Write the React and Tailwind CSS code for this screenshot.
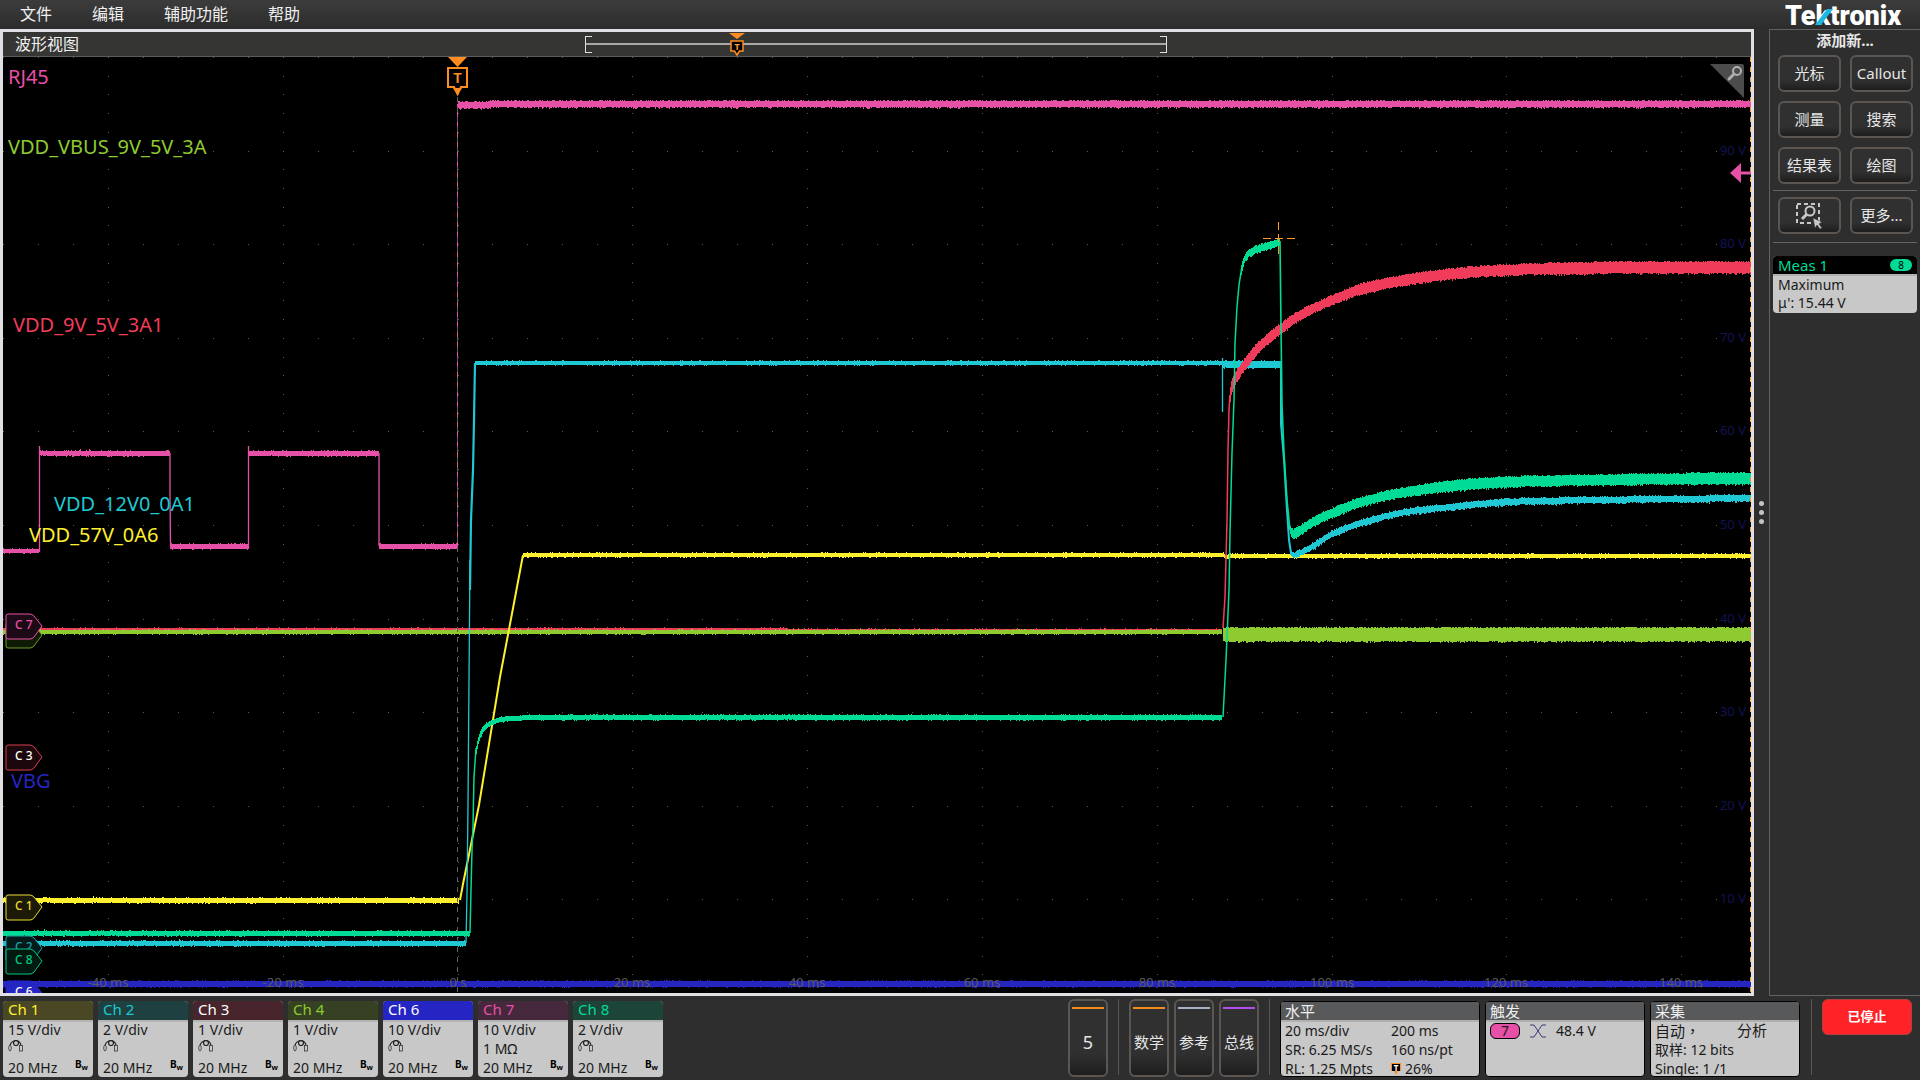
import React from "react";

const menus = ["文件", "编辑", "辅助功能", "帮助"];

const channels = [
    { name: "Ch 1", scale: "15 V/div", head: "bg-[#4a4824] text-[#fff02e]" },
    { name: "Ch 2", scale: "2 V/div", head: "bg-[#1e4040] text-[#1fc8d2]" },
    { name: "Ch 3", scale: "1 V/div", head: "bg-[#48252c] text-white" },
    { name: "Ch 4", scale: "1 V/div", head: "bg-[#364022] text-[#8ccb30]" },
    { name: "Ch 6", scale: "10 V/div", head: "bg-[#2525c4] text-white" },
    { name: "Ch 7", scale: "10 V/div", impedance: "1 MΩ", head: "bg-[#45283c] text-[#e650a6]" },
    { name: "Ch 8", scale: "2 V/div", head: "bg-[#1c4438] text-[#00dc96]" },
];

const addButtons = ["光标", "Callout", "测量", "搜索", "结果表", "绘图"];

const sourceButtons = [
    { name: "数学", bar: "bg-[#f28a1e]" },
    { name: "参考", bar: "bg-[#a8b0c4]" },
    { name: "总线", bar: "bg-[#b04ef0]" },
];

// plot area, in svg units
const LEFT = 3;
const TOP = 57;
const WIDTH = 1748;
const HEIGHT = 936;
const BOTTOM = TOP + HEIGHT;
const DIV_X = WIDTH / 10;
const DIV_Y = HEIGHT / 10;
const ZERO_X = 457.5;

// each point is [x, y, thickness]; these get a noisy edge
const bands = [
    { color: "#2525c0", points: [[3, 984, 6], [1751, 984, 6]] },
    { color: "#f03c5a", noise: 0.08, points: [[3, 630, 4], [300, 630, 4], [1222, 631, 4]] },
    { color: "#8ecb30", points: [[3, 632, 4], [1222, 632, 4]] },
    { color: "#8ecb30", noise: 0.6, points: [[1223, 634, 13], [1751, 634, 13]] },
    { color: "#fff02e", points: [[3, 900, 5], [459, 900, 5]] },
    { color: "#fff02e", points: [[523, 555, 4], [1222, 555, 4], [1226, 557, 4], [1230, 556, 4], [1751, 556, 4]] },
    { color: "#1fc8d2", points: [[3, 943, 5], [466, 943, 5]] },
    { color: "#1fc8d2", points: [[475, 363, 4], [1222, 363, 4]] },
    { color: "#1fc8d2", points: [[1223, 364, 7], [1281, 364, 7]] },
    {
        color: "#1fc8d2", noise: 0.3,
        points: [[1290, 553, 4], [1294, 555, 5], [1311, 547, 6], [1332, 534, 6], [1361, 523, 6], [1400, 513, 6],
            [1450, 507, 6], [1507, 502, 6], [1593, 500, 6], [1751, 498, 6]],
    },
    {
        color: "#f03c5a", noise: 0.5,
        points: [[1229, 402, 14], [1231, 388, 14], [1234, 380, 12], [1239, 372, 11], [1246, 362, 11], [1254, 352, 11],
            [1264, 342, 10], [1280, 329, 10], [1300, 315, 9], [1332, 300, 9], [1361, 289, 10], [1400, 281, 10],
            [1450, 274, 10], [1507, 270, 10], [1593, 268, 11], [1751, 267, 11]],
    },
    { color: "#00dc96", points: [[3, 933, 5], [470, 933, 5]] },
    { color: "#00dc96", noise: 0.1, points: [[476, 750, 8], [479, 737, 7], [484, 728, 6], [493, 722, 5], [504, 719, 5], [521, 718, 5], [560, 717, 5]] },
    { color: "#00dc96", points: [[560, 717, 5], [1222, 717, 5]] },
    { color: "#00dc96", noise: 0.3, points: [[1241, 270, 9], [1243, 262, 8], [1246, 256, 7], [1252, 251, 7], [1264, 247, 7], [1280, 242, 7]] },
    {
        color: "#00dc96", noise: 0.4,
        points: [[1290, 530, 8], [1293, 534, 9], [1311, 523, 9], [1332, 513, 9], [1361, 502, 9], [1400, 493, 9],
            [1450, 486, 10], [1507, 482, 10], [1593, 480, 10], [1751, 478, 11]],
    },
    { color: "#e650a6", points: [[3, 551, 4], [39, 551, 4]] },
    { color: "#e650a6", points: [[39, 453, 5], [170, 453, 5]] },
    { color: "#e650a6", points: [[170, 546, 5], [249, 546, 5]] },
    { color: "#e650a6", points: [[249, 453, 5], [379, 453, 5]] },
    { color: "#e650a6", points: [[379, 546, 5], [458, 546, 5]] },
    { color: "#e650a6", noise: 0.35, points: [[458, 105, 6], [530, 104, 6], [1751, 104, 6]] },
];

// the fast edges
const edges = [
    { color: "#fff02e", width: 2, d: "M460 900L463 884L479 805L500 677L514 603L523 555" },
    { color: "#1fc8d2", width: 1.3, d: "M466 943L467 893L468 805L469 680L470 560" },
    { color: "#1fc8d2", width: 2.2, d: "M470 590L471 520L473 470L474 420L475 363" },
    { color: "#1fc8d2", width: 1.3, d: "M1222.5 358V412" },
    { color: "#1fc8d2", width: 2, d: "M1281 364L1281 424L1284 460L1287 510L1289 540L1291 553" },
    { color: "#f03c5a", width: 1.5, d: "M1223 628L1225 597L1227 520L1228 450L1229 410L1230 395" },
    { color: "#00dc96", width: 1.5, d: "M470 933L471 890L472 850L473 827L474 777L476 748" },
    { color: "#00dc96", width: 1.5, d: "M1223 717L1226 660L1229 590L1230 533L1232 453L1234 400L1235 343L1237 307L1239 285L1242 266" },
    { color: "#00dc96", width: 1.6, d: "M1280 241L1281 327L1282 404L1284 453L1287 500L1290 530" },
    { color: "#e650a6", width: 1.3, d: "M39.5 552V446M170 453L170 493L170.5 546M248.5 548V446M379 453L379 546" },
    { color: "#e650a6", width: 1, d: "M457.5 546V104" },
];

const labels = [
    { text: "RJ45", x: 8, y: 84, color: "#e650a6" },
    { text: "VDD_VBUS_9V_5V_3A", x: 8, y: 154, color: "#8ecb30" },
    { text: "VDD_9V_5V_3A1", x: 13, y: 332, color: "#f03c5a" },
    { text: "VDD_12V0_0A1", x: 54, y: 511, color: "#1fc8d2" },
    { text: "VDD_57V_0A6", x: 29, y: 542, color: "#fff02e" },
    { text: "VBG", x: 11, y: 788, color: "#2525c4" },
];

const badges = [
    { text: "C 4", y: 623, color: "#6d9a28", fill: "#0f1a05" },
    { text: "C 7", y: 614, color: "#e650a6", fill: "#1c0a16" },
    { text: "C 3", y: 745, color: "#d83c54", fill: "#1c080c", ink: "#ffffff" },
    { text: "C 1", y: 895, color: "#e8dc30", fill: "#1c1a06" },
    { text: "C 2", y: 936, color: "#1aa0a8", fill: "#04191a" },
    { text: "C 8", y: 949, color: "#00c888", fill: "#03180f" },
    { text: "C 6", y: 981, color: "#2525c4", fill: "#2525c4", ink: "#ffffff" },
];

const random = (n) => {
    const s = Math.sin(n * 12.9898) * 43758.5453;
    return s - Math.floor(s);
};

const range = (n) => Array.from({ length: n }, (_, i) => i);

const bandPath = (points, noise = 0.15) => {
    const slope = (i, k) => {
        const a = points[Math.max(0, i - 1)];
        const b = points[Math.min(points.length - 1, i + 1)];
        return (b[k] - a[k]) / (b[0] - a[0]);
    };
    const value = (i, x, k) => {
        const a = points[i];
        const b = points[i + 1];
        const h = b[0] - a[0];
        const t = (x - a[0]) / h;
        return (2 * t ** 3 - 3 * t ** 2 + 1) * a[k] + (t ** 3 - 2 * t ** 2 + t) * h * slope(i, k)
            + (-2 * t ** 3 + 3 * t ** 2) * b[k] + (t ** 3 - t ** 2) * h * slope(i + 1, k);
    };

    let d = "";
    let i = 0;
    for (let x = points[0][0]; x < points[points.length - 1][0]; x++) {
        while (x >= points[i + 1][0]) i++;
        const y = value(i, x, 1);
        const half = value(i, x, 2) / 2;
        const up = Math.round(y - half) - (random(x + y) < noise ? 1 : 0);
        const down = Math.round(y + half) + (random(x * 3 + y) < noise ? 1 : 0) + (noise > 0.25 && random(x * 7) < 0.15 ? 1 : 0);
        d += `M${x} ${up}h1V${down}h-1z`;
    }
    return d;
};

const TriggerMark = () => (
    <g>
        <path d="M448 57H467L457.5 67z" fill="#ff8c1e" />
        <path d="M448 68H467V87H461L457.5 94L454 87H448z" fill="#000" stroke="#ff8c1e" strokeWidth="2" />
        <path d="M453 88H462L457.5 95z" fill="#ff8c1e" />
        <text x="457.5" y="83" textAnchor="middle" fontSize="15" fontWeight="600" fill="#ff8c1e">T</text>
    </g>
);

const Waveforms = () => (
    <svg viewBox={`${LEFT} ${TOP} ${WIDTH} ${HEIGHT}`} className="block h-auto w-full bg-black" role="img" aria-label="波形视图">
        <g fill="#5a5a5a" shapeRendering="crispEdges">
            {range(11).map((j) => range(51).map((i) => (
                <rect key={`h${j}-${i}`} x={Math.round(LEFT + (i * DIV_X) / 5)} y={Math.round(TOP + j * DIV_Y)} width="1" height="1" />
            )))}
            {range(10).map((j) => range(51).map((i) => (
                <rect key={`v${j}-${i}`} x={Math.round(ZERO_X + (j - 2) * DIV_X)} y={Math.round(TOP + (i * DIV_Y) / 5)} width="1" height="1" />
            )))}
        </g>
        <g fontSize="13" fill="#121254" textAnchor="end">
            {range(9).map((i) => (
                <text key={i} x="1746" y={Math.round(TOP + (i + 1) * DIV_Y) + 4}>{90 - i * 10} V</text>
            ))}
        </g>

        <g shapeRendering="crispEdges">
            {bands.slice(0, 11).map((b, i) => <path key={i} d={bandPath(b.points, b.noise)} fill={b.color} />)}
        </g>
        {edges.map((e, i) => <path key={i} d={e.d} fill="none" stroke={e.color} strokeWidth={e.width} />)}
        <g shapeRendering="crispEdges">
            {bands.slice(11).map((b, i) => <path key={i} d={bandPath(b.points, b.noise)} fill={b.color} />)}
        </g>

        <path d={`M457.5 ${TOP}V${BOTTOM}`} stroke="#606060" strokeDasharray="5 5" />
        <path d={`M1750.5 ${TOP}V${BOTTOM}`} stroke="#ff9a24" strokeDasharray="5 5" />
        <path d="M1263 238.5h8m4 0h8m4 0h8M1278.5 222v8m0 4v8m0 4v8" stroke="#ff9a24" fill="none" />

        <g fontSize="13" fill="#5a5a5a" textAnchor="middle">
            {range(10).map((i) => {
                const t = i * 20 - 40;
                return <text key={i} x={Math.round(ZERO_X + (i - 2) * DIV_X)} y="987">{t === 0 ? "0 s" : `${t} ms`}</text>;
            })}
        </g>
        <g fontSize="20">
            {labels.map((l) => <text key={l.text} x={l.x} y={l.y} fill={l.color}>{l.text}</text>)}
        </g>
        {badges.map((b) => (
            <g key={b.text}>
                <path
                    d={`M8 ${b.y}H30Q32 ${b.y} 34 ${b.y + 2}L42 ${b.y + 12}L34 ${b.y + 23}Q32 ${b.y + 25} 30 ${b.y + 25}H8Q6 ${b.y + 25} 6 ${b.y + 23}V${b.y + 2}Q6 ${b.y} 8 ${b.y}z`}
                    fill={b.fill}
                    stroke={b.color}
                />
                <text x="15" y={b.y + 15} fontSize="12" fontWeight="500" fill={b.ink ?? b.color}>{b.text}</text>
            </g>
        ))}

        <TriggerMark />
        <path d="M1710 64H1742Q1744 64 1744 66V98z" fill="#4c4c4c" />
        <g fill="none" stroke="#b0b0b0">
            <circle cx="1737" cy="71" r="4" strokeWidth="2" />
            <path d="M1734 74L1729 79" strokeWidth="3" strokeLinecap="round" />
        </g>
        <path d="M1730 173L1741 163V171.5H1751V174.5H1741V183z" fill="#e650a6" />
    </svg>
);

const Overview = () => (
    <div className="relative ml-[33.3%] h-[17px] w-[33.3%] border-x border-[#e0e0e0]">
        <span className="absolute left-0 top-0 h-full w-1.5 border-y border-[#e0e0e0]" />
        <span className="absolute right-0 top-0 h-full w-1.5 border-y border-[#e0e0e0]" />
        <span className="absolute inset-x-0 top-[7px] h-0.5 bg-[#a8a8a8]" />
        <svg viewBox="0 0 16 24" className="absolute -top-1 left-[26%] h-6 w-4 -translate-x-1/2">
            <path d="M0 1H16L8 7z" fill="#ff8c1e" />
            <path d="M2 9H14V19H10.500L8 23L5.500 19H2z" fill="#000" stroke="#ff8c1e" strokeWidth="1.500" />
            <text x="8" y="18" textAnchor="middle" fontSize="9" fontWeight="700" fill="#ff9a3c">T</text>
        </svg>
    </div>
);

const Logo = () => (
    <svg viewBox="0 0 122 29" className="h-[29px] w-[122px] overflow-visible" role="img" aria-label="Tektronix">
        <text x="1" y="25" fontFamily="Roboto" fontSize="27" fontWeight="900" fill="#fff">Tektronix</text>
        <path d="M31 25L43 9H49L37 25z" fill="#1cb8e4" />
    </svg>
);

const ProbeIcon = () => (
    <svg viewBox="0 0 16 13" className="h-[13px] w-4" fill="none" stroke="#222">
        <ellipse cx="2" cy="9" rx="1.300" ry="3" strokeWidth=".7" />
        <path d="M2 6Q3.500 2 8 1.500Q12 2 13 6" strokeWidth="1.200" />
        <circle cx="8" cy="4" r="2.500" strokeWidth="1.200" />
        <rect x="11.500" y="6.500" width="3" height="5.500" strokeWidth=".7" />
    </svg>
);

const AreaZoomIcon = () => (
    <svg viewBox="0 0 27 26" className="h-[26px] w-[27px]" fill="none" stroke="#c8c8c8">
        <path d="M1 1H23V20H1z" strokeWidth="2" strokeDasharray="4 3" />
        <circle cx="14" cy="8" r="4.500" strokeWidth="2" />
        <path d="M11 11L6 16" strokeWidth="3" />
        <path d="M17 15L26 19L23 21L26 25L24 26L21 22L19 25z" fill="#c8c8c8" stroke="#2e2e2e" strokeWidth=".5" />
    </svg>
);

const PanelButton = ({ children, label }) => (
    <button
        aria-label={label}
        className="flex h-[37px] items-center justify-center rounded-md border-2 border-[#5c5652] bg-linear-to-b from-[#303030] from-70% to-[#1e1e1e] text-[15px] text-[#e6e6e6]"
    >
        {children}
    </button>
);

const TallButton = ({ name, bar, big }) => (
    <button className="flex h-[78px] w-10 flex-col items-center rounded-md border-2 border-[#5c5652] bg-linear-to-b from-[#303030] from-70% to-[#1e1e1e] pt-1.5 text-[#e6e6e6]">
        <span className={`h-0.5 w-8 ${bar}`} />
        <span className={`flex flex-1 items-center pb-1 pt-1 ${big ? "text-lg" : "text-[15px]"}`}>{name}</span>
    </button>
);

const Divider = () => <span className="h-[76px] w-px bg-[#5a5652]" />;

const Settings = ({ title, width, children }) => (
    <section className={`h-[76px] overflow-hidden rounded border border-black bg-[#c8c8c8] text-sm leading-[19px] text-[#1a1a1a] ${width}`}>
        <h2 className="h-5 border-b-2 border-[#b0b0b0] bg-[#58595b] px-1 text-[15px] leading-[18px] text-[#f0f0f0]">{title}</h2>
        <div className="-mt-px grid auto-rows-[19px] px-1">{children}</div>
    </section>
);

const App = () => {
    return (
        <div className="flex min-h-screen flex-col bg-[#2e2e2e] font-['Noto_Sans','Noto_Sans_CJK_SC',sans-serif]">
            <header className="flex h-[29px] items-center bg-linear-to-b from-[#3c3c3c] to-[#2c2c2c]">
                <nav className="flex flex-1 gap-10 pl-5 text-base leading-6 text-[#f0f0f0]">
                    {menus.map((m) => <button key={m} className="-mt-0.5">{m}</button>)}
                </nav>
                <div className="flex w-[151px] justify-center">
                    <Logo />
                </div>
            </header>

            <main className="flex">
                <section className="min-w-0 flex-1 border-3 border-[#e0e0e4]">
                    <div className="flex h-[25px] items-center border-b border-[#5c5c5c] bg-[#353533]">
                        <h1 className="w-0 whitespace-nowrap pl-3 text-base leading-6 text-[#f0f0f0]">波形视图</h1>
                        <div className="-ml-3 flex-1">
                            <Overview />
                        </div>
                    </div>
                    <Waveforms />
                </section>

                <div className="flex w-[15px] flex-col items-center justify-center gap-1 pb-px">
                    {range(3).map((i) => <span key={i} className="size-[5px] rounded-full bg-[#c4c4c4]" />)}
                </div>

                <aside className="w-[151px] border-y border-l border-[#626262] px-[3px]">
                    <h2 className="text-center text-[15px] font-bold leading-5 text-[#e6e6e6]">添加新...</h2>
                    <div className="mt-[5px] grid grid-cols-2 gap-[9px] border-b border-[#6a625c] pb-1.5 pl-[5px] pr-1">
                        {addButtons.map((b) => <PanelButton key={b}>{b}</PanelButton>)}
                    </div>
                    <div className="grid grid-cols-2 gap-[9px] border-b border-[#6a625c] pb-2 pl-[5px] pr-1 pt-1.5">
                        <PanelButton label="缩放区域"><AreaZoomIcon /></PanelButton>
                        <PanelButton>更多...</PanelButton>
                    </div>
                    <section className="mt-[13px] overflow-hidden rounded bg-[#c8c8c8] text-sm leading-[18px] text-[#1a1a1a]">
                        <h3 className="flex items-center justify-between border-b-2 border-[#b0b0b0] bg-black px-[5px] text-[15px] text-[#00dc96]">
                            Meas 1
                            <span className="w-[22px] rounded-full bg-[#00dc96] text-center text-[10px] leading-3 text-black">8</span>
                        </h3>
                        <p className="px-[5px]">Maximum</p>
                        <p className="px-[5px] pb-px">μ': 15.44 V</p>
                    </section>
                </aside>
            </main>

            <footer className="flex h-[84px] items-start gap-[10px] pl-[3px] pr-2 pt-[3px]">
                <div className="flex flex-1 gap-[5px] pt-0.5">
                    {channels.map((c) => (
                        <section key={c.name} className="h-[76px] w-[90px] overflow-hidden rounded bg-[#c8c8c8] text-sm leading-[19px] text-[#1a1a1a]">
                            <h2 className={`h-[19px] px-[5px] text-[15px] leading-[17px] ${c.head}`}>{c.name}</h2>
                            <div className="border-t-2 border-[#b4b4b4] px-[5px]">
                                <p className="-mt-0.5">{c.scale}</p>
                                <div className="h-[19px]">{c.impedance ?? <ProbeIcon />}</div>
                                <p className="flex justify-between">
                                    20 MHz
                                    <span className="text-[10px] font-bold leading-3 text-black">B<sub>w</sub></span>
                                </p>
                            </div>
                        </section>
                    ))}
                </div>

                <TallButton name="5" bar="bg-[#f28a1e]" big />
                <Divider />
                <div className="flex gap-[5px]">
                    {sourceButtons.map((s) => <TallButton key={s.name} name={s.name} bar={s.bar} />)}
                </div>
                <Divider />

                <div className="flex gap-[5px] pr-px pt-0.5">
                    <Settings title="水平" width="w-[200px]">
                        <div className="grid auto-rows-[19px] grid-cols-[106px_1fr]">
                            <span>20 ms/div</span>
                            <span>200 ms</span>
                            <span>SR: 6.25 MS/s</span>
                            <span>160 ns/pt</span>
                            <span>RL: 1.25 Mpts</span>
                            <span className="flex items-center gap-1">
                                <svg viewBox="0 0 10 12" className="h-3 w-2.5">
                                    <path d="M0 0H10V8H7L5 12L3 8H0z" fill="#ff8c1e" />
                                    <path d="M1 1H9V8H1z" fill="#000" />
                                    <text x="5" y="8" textAnchor="middle" fontSize="8" fontWeight="700" fill="#fff">T</text>
                                </svg>
                                26%
                            </span>
                        </div>
                    </Settings>
                    <Settings title="触发" width="w-[160px]">
                        <div className="flex items-center">
                            <span className="w-[30px] rounded-md border border-black bg-[#e650a6] text-center leading-[14px]">7</span>
                            <svg viewBox="0 0 16 14" className="ml-2.5 h-3.5 w-4" fill="none" stroke="#3a3a7a">
                                <path d="M0 1H4L12 13H16M0 13H4L12 1H16" />
                            </svg>
                            <span className="ml-2.5">48.4 V</span>
                        </div>
                    </Settings>
                    <Settings title="采集" width="w-[150px]">
                        <div className="flex text-[15px]">
                            <span className="w-[82px] font-['Noto_Sans_CJK_TC',sans-serif]">自动，</span>
                            <span>分析</span>
                        </div>
                        <p>取样: 12 bits</p>
                        <p>Single: 1 /1</p>
                    </Settings>
                </div>
                <Divider />
                <button className="h-9 w-[90px] rounded-md border border-[#b04040] bg-[#ff2328] text-[13px] font-bold text-white">已停止</button>
            </footer>
        </div>
    );
};

export default App;
